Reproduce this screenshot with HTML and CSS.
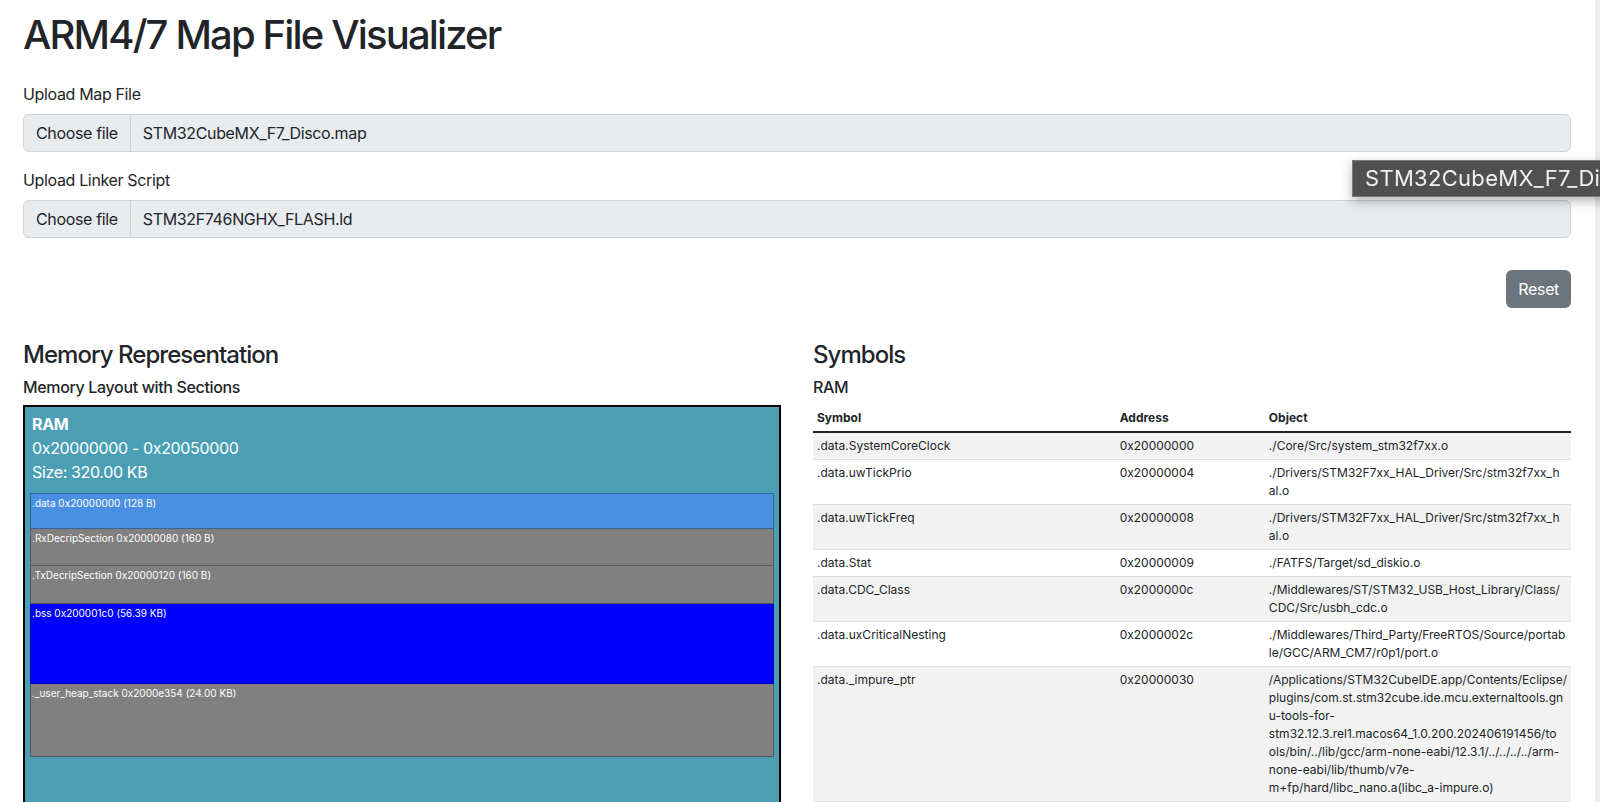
FILE: index.html
```html
<!DOCTYPE html>
<html lang="en">
<head>
<meta charset="utf-8">
<title>ARM4/7 Map File Visualizer</title>
<link rel="stylesheet" href="styles.css">
</head>
<body>
<div class="page">
  <h1 class="title">ARM4/7 Map File Visualizer</h1>

  <div class="field">
    <label class="field-label">Upload Map File</label>
    <div class="file-input"><span class="file-btn">Choose file</span><span class="file-name">STM32CubeMX_F7_Disco.map</span></div>
  </div>
  <div class="field">
    <label class="field-label">Upload Linker Script</label>
    <div class="file-input"><span class="file-btn">Choose file</span><span class="file-name">STM32F746NGHX_FLASH.ld</span></div>
  </div>

  <div class="actions"><button class="btn-reset" type="button">Reset</button></div>

  <div class="columns">
    <section class="col">
      <h4 class="col-title">Memory Representation</h4>
      <h6 class="col-sub">Memory Layout with Sections</h6>
      <div class="mem-box">
        <div class="mem-head">
          <div class="mem-name">RAM</div>
          <div>0x20000000 - 0x20050000</div>
          <div>Size: 320.00 KB</div>
        </div>
        <div class="sections">
          <div class="sec sec-data" style="height:36px">.data 0x20000000 (128 B)</div>
          <div class="sec sec-gray" style="height:37px">.RxDecripSection 0x20000080 (160 B)</div>
          <div class="sec sec-gray" style="height:38px">.TxDecripSection 0x20000120 (160 B)</div>
          <div class="sec sec-bss" style="height:80px">.bss 0x200001c0 (56.39 KB)</div>
          <div class="sec sec-gray" style="height:73px">._user_heap_stack 0x2000e354 (24.00 KB)</div>
        </div>
      </div>
    </section>

    <section class="col">
      <h4 class="col-title">Symbols</h4>
      <h6 class="col-sub">RAM</h6>
      <table class="sym-table">
        <colgroup><col class="c-sym"><col class="c-addr"><col class="c-obj"></colgroup>
        <thead>
          <tr><th>Symbol</th><th>Address</th><th>Object</th></tr>
        </thead>
        <tbody>
          <tr><td>.data.SystemCoreClock</td><td>0x20000000</td><td>./Core/Src/system_stm32f7xx.o</td></tr>
          <tr><td>.data.uwTickPrio</td><td>0x20000004</td><td>./Drivers/STM32F7xx_HAL_Driver/Src/stm32f7xx_h<br>al.o</td></tr>
          <tr><td>.data.uwTickFreq</td><td>0x20000008</td><td>./Drivers/STM32F7xx_HAL_Driver/Src/stm32f7xx_h<br>al.o</td></tr>
          <tr><td>.data.Stat</td><td>0x20000009</td><td>./FATFS/Target/sd_diskio.o</td></tr>
          <tr><td>.data.CDC_Class</td><td>0x2000000c</td><td>./Middlewares/ST/STM32_USB_Host_Library/Class/<br>CDC/Src/usbh_cdc.o</td></tr>
          <tr><td>.data.uxCriticalNesting</td><td>0x2000002c</td><td>./Middlewares/Third_Party/FreeRTOS/Source/portab<br>le/GCC/ARM_CM7/r0p1/port.o</td></tr>
          <tr><td>.data._impure_ptr</td><td>0x20000030</td><td>/Applications/STM32CubeIDE.app/Contents/Eclipse/<br>plugins/com.st.stm32cube.ide.mcu.externaltools.gn<br>u-tools-for-<br>stm32.12.3.rel1.macos64_1.0.200.202406191456/to<br>ols/bin/../lib/gcc/arm-none-eabi/12.3.1/../../../../arm-<br>none-eabi/lib/thumb/v7e-<br>m+fp/hard/libc_nano.a(libc_a-impure.o)</td></tr>
        </tbody>
      </table>
    </section>
  </div>
</div>

<div class="scrollbar"></div>
<div class="tooltip">STM32CubeMX_F7_Disco.map</div>
</body>
</html>
```

FILE: styles.css
```css
html, body {
  margin: 0;
  padding: 0;
  overflow: hidden;
  background: #fff;
}
body {
  font-family: Inter, "Noto Sans", sans-serif;
  font-size: 16px;
  line-height: 1.5;
  color: #212529;
  letter-spacing: -0.35px;
}
.page {
  padding: 11px 29px 0 23px;
}
.title {
  font-size: 40px;
  font-weight: 500;
  line-height: 1.2;
  letter-spacing: -1.85px;
  margin: 0 0 23px;
}
.field {
  margin-bottom: 16px;
}
.field-label {
  display: block;
  margin-bottom: 8px;
}
.file-input {
  display: flex;
  height: 38px;
  box-sizing: border-box;
  border: 1px solid #ced4da;
  border-radius: 6px;
  background: #e9ecef;
  overflow: hidden;
}
.file-btn {
  display: flex;
  align-items: center;
  padding: 0 12px;
  border-right: 1px solid #ced4da;
}
.file-name {
  display: flex;
  align-items: center;
  padding-left: 12px;
}
.actions {
  display: flex;
  justify-content: flex-end;
  margin-top: 32px;
}
.btn-reset {
  height: 38px;
  padding: 0 12px;
  border: none;
  border-radius: 6px;
  background: #6c757d;
  color: #fff;
  font: inherit;
  letter-spacing: inherit;
}
.columns {
  display: grid;
  grid-template-columns: 1fr 1fr;
  column-gap: 32px;
  margin-top: 33px;
}
.col-title {
  font-size: 24px;
  font-weight: 500;
  line-height: 1.2;
  letter-spacing: -0.95px;
  margin: 0 0 8px;
}
.col-sub {
  font-size: 16px;
  font-weight: 500;
  line-height: 1.2;
  margin: 0 0 8px;
}
.mem-box {
  border: 2px solid #000;
  background: #4a9fb5;
  padding: 5px 5px 80px;
  color: #fff;
}
.mem-head {
  margin-bottom: 9px;
  padding-left: 2px;
}
.mem-name {
  font-weight: 700;
}
.sec {
  box-sizing: border-box;
  border: 1px solid rgba(0, 0, 0, 0.3);
  font-size: 10px;
  line-height: 1.5;
  letter-spacing: 0;
  padding: 2px 1px;
  color: #fff;
}
.sec + .sec {
  border-top: none;
}
.sec-data { background: #4a90e2; }
.sec-gray { background: #808080; }
.sec-bss { background: #0000ff; }

.sym-table {
  width: 100%;
  border-collapse: collapse;
  font-size: 12px;
  line-height: 1.5;
  letter-spacing: 0;
}
.c-sym { width: 307px; }
.c-addr { width: 151px; }
.sym-table th,
.sym-table td {
  padding: 4px;
  text-align: left;
  vertical-align: top;
}
.sym-table th {
  font-weight: 700;
  border-bottom: 2px solid #212529;
}
.sym-table td {
  border-bottom: 1px solid #dee2e6;
  white-space: nowrap;
}
.sym-table tbody tr:nth-child(odd) td {
  background: #f2f2f2;
}
.scrollbar {
  position: fixed;
  top: 0;
  right: 0;
  bottom: 0;
  width: 5px;
  background: #ececec;
}
.tooltip {
  position: absolute;
  left: 1352px;
  top: 160px;
  height: 37px;
  box-sizing: border-box;
  padding: 0 12px;
  display: flex;
  align-items: center;
  background: #505050;
  border: 1px solid #7a7a7a;
  color: #f0f0f0;
  font-size: 22px;
  letter-spacing: 0.3px;
  white-space: nowrap;
  box-shadow: 0 4px 12px rgba(0, 0, 0, 0.3);
}
```
